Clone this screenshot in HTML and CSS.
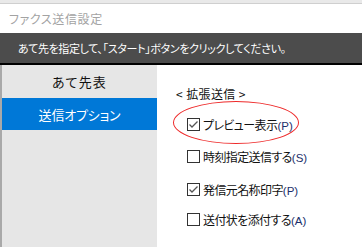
FILE: index.html
```html
<!DOCTYPE html>
<html lang="ja">
<head>
<meta charset="utf-8">
<link rel="stylesheet" href="styles.css">
</head>
<body>
<div class="window">
  <div class="topstrip"></div>
  <div class="titlebar">ファクス送信設定</div>
  <div class="banner">あて先を指定して、「スタート」ボタンをクリックしてください。</div>
  <div class="main">
    <nav class="sidebar">
      <div class="nav-item">あて先表</div>
      <div class="nav-item active">送信オプション</div>
    </nav>
    <section class="content">
      <div class="group-title">&lt; 拡張送信 &gt;</div>
      <div class="options">
        <label class="option highlighted">
          <span class="box checked"><svg viewBox="0 0 13 13" width="13" height="13"><path d="M2.5 6.5 L5 9 L10.5 3.5" fill="none" stroke="#555" stroke-width="1.3"/></svg></span>
          <span class="label">プレビュー表示<span class="key">(P)</span></span>
          <span class="ring"></span>
        </label>
        <label class="option">
          <span class="box"></span>
          <span class="label">時刻指定送信する<span class="key">(S)</span></span>
        </label>
        <label class="option">
          <span class="box checked"><svg viewBox="0 0 13 13" width="13" height="13"><path d="M2.5 6.5 L5 9 L10.5 3.5" fill="none" stroke="#555" stroke-width="1.3"/></svg></span>
          <span class="label">発信元名称印字<span class="key">(P)</span></span>
        </label>
        <label class="option">
          <span class="box"></span>
          <span class="label">送付状を添付する<span class="key">(A)</span></span>
        </label>
      </div>
    </section>
  </div>
</div>
</body>
</html>
```
FILE: styles.css
```css
* { box-sizing: border-box; }
html, body { margin: 0; padding: 0; background: #fff; }
body {
  font-family: "Noto Sans CJK JP", "Noto Sans", sans-serif;
  font-feature-settings: "palt";
  width: 362px;
  height: 247px;
  overflow: hidden;
}
.window { display: flex; flex-direction: column; height: 247px; }
.topstrip {
  height: 4px;
  background: #e9e9e9;
  border-bottom: 1px solid #cfcfcf;
}
.titlebar {
  height: 29px;
  padding-left: 9px;
  display: flex;
  align-items: center;
  font-size: 12px;
  color: #a3a3a3;
  letter-spacing: 0.6px;
}
.banner {
  height: 32px;
  background: #4c4c4c;
  border-bottom: 2px solid #000;
  color: #fff;
  padding-left: 18px;
  display: flex;
  align-items: center;
  font-size: 11px;
  letter-spacing: -0.35px;
}
.main { flex: 1; display: flex; }
.sidebar {
  width: 157px;
  background: #e6e6e6;
  border-left: 2px solid #a9a9a9;
  display: flex;
  flex-direction: column;
}
.nav-item {
  height: 33px;
  display: flex;
  align-items: center;
  justify-content: center;
  font-size: 13px;
  color: #111;
  letter-spacing: 1.2px;
}
.nav-item.active {
  height: 32px;
  background: #0078d7;
  color: #fff;
  letter-spacing: -0.2px;
}
.content { flex: 1; padding: 19px 0 0 19px; }
.group-title { font-size: 12px; color: #111; height: 20px; line-height: 20px; letter-spacing: 0.4px; }
.options { display: flex; flex-direction: column; padding-left: 11px; padding-top: 13px; }
.option {
  position: relative;
  display: flex;
  align-items: center;
  gap: 3px;
  height: 14px;
  font-size: 12px;
  color: #111;
  margin-bottom: 18px;
}
.option:nth-child(2) { margin-bottom: 19px; }
.option:nth-child(3) { margin-bottom: 16px; }
.box {
  width: 13px;
  height: 13px;
  border: 1px solid #333;
  background: #fff;
  display: flex;
  align-items: center;
  justify-content: center;
  flex: none;
}
.box svg { display: block; margin: -1px; }
.label { white-space: nowrap; letter-spacing: -0.6px; }
.key { color: #1b2f6b; font-family: "Liberation Sans", sans-serif; font-size: 11.5px; letter-spacing: 0; }
.ring {
  position: absolute;
  left: -14px;
  top: -16px;
  width: 126px;
  height: 43px;
  border: 1.3px solid #ee2a2a;
  border-radius: 50%;
  pointer-events: none;
}
```
